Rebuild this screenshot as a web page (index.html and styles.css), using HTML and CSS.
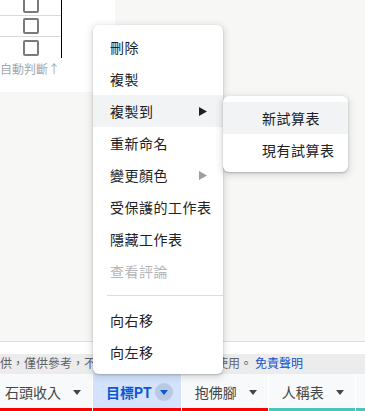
FILE: index.html
```html
<!DOCTYPE html>
<html lang="zh-Hant">
<head>
<meta charset="utf-8">
<title>Sheets menu</title>
<link rel="stylesheet" href="styles.css">
</head>
<body>
<div class="app">
  <div class="sheet">
    <div class="cells">
      <div class="grid">
        <div class="row"><span class="cb"></span></div>
        <div class="row"><span class="cb"></span></div>
        <div class="row last"><span class="cb"></span></div>
      </div>
      <div class="note">自動判斷↑</div>
    </div>
  </div>
  <div class="hscroll"></div>
  <div class="notice">供，僅供參考，不得轉載或作為商業上之使用。 <a class="link">免責聲明</a></div>
  <div class="tabs">
    <div class="tab red"><span class="tname">石頭收入</span><span class="caret"></span></div>
    <div class="tab red active"><span class="tname">目標PT</span><span class="cbtn"><span class="caret"></span></span></div>
    <div class="tab red"><span class="tname">抱佛腳</span><span class="caret"></span></div>
    <div class="tab teal"><span class="tname">人稱表</span><span class="caret"></span></div>
    <div class="tab teal more"></div>
  </div>
</div>

<div class="menu main">
  <div class="item">刪除</div>
  <div class="item">複製</div>
  <div class="item hover">複製到<svg class="arrow" width="8" height="9" viewBox="0 0 8 9"><path d="M0 0L8 4.5L0 9Z" fill="#202124"/></svg></div>
  <div class="item">重新命名</div>
  <div class="item">變更顏色<svg class="arrow" width="8" height="9" viewBox="0 0 8 9"><path d="M0 0L8 4.5L0 9Z" fill="#9aa0a6"/></svg></div>
  <div class="item">受保護的工作表</div>
  <div class="item">隱藏工作表</div>
  <div class="item disabled">查看評論</div>
  <div class="sep"></div>
  <div class="item">向右移</div>
  <div class="item">向左移</div>
</div>

<div class="menu sub">
  <div class="item hover">新試算表</div>
  <div class="item">現有試算表</div>
</div>
</body>
</html>
```

FILE: styles.css
```css
* { box-sizing: border-box; }
html, body {
  margin: 0;
  padding: 0;
}
body {
  width: 365px;
  height: 411px;
  overflow: hidden;
  background: #f7f8f6;
  font-family: Roboto, "Noto Sans CJK TC", sans-serif;
  color: #202124;
  position: relative;
}
.app {
  display: flex;
  flex-direction: column;
  height: 411px;
}
.sheet {
  height: 342px;
  border-bottom: 1px solid #dadce0;
  overflow: hidden;
}
.cells {
  width: 115px;
  height: 92px;
  background: #fff;
  overflow: hidden;
}
.grid {
  width: 62px;
  border-right: 1px solid #000;
  margin-top: -5px;
}
.row {
  height: 21px;
  border-bottom: 1px solid #d9d9d9;
  display: flex;
  align-items: center;
  justify-content: center;
}
.row.last {
  border-bottom: none;
}
.cb {
  width: 16px;
  height: 16px;
  border: 2px solid #7a7a7a;
  border-radius: 2px;
}
.note {
  margin-top: 4px;
  font-size: 12px;
  line-height: 16px;
  color: #a3a8ad;
  white-space: nowrap;
}
.hscroll {
  height: 12px;
  background: #fff;
}
.notice {
  height: 20px;
  background: #ececec;
  font-size: 12px;
  line-height: 20px;
  color: #5f6368;
  white-space: nowrap;
  overflow: hidden;
}
.link {
  color: #1155cc;
}
.tabs {
  height: 37px;
  display: flex;
  gap: 1px;
  background: #fff;
  margin-left: -8px;
  overflow: hidden;
}
.tab {
  flex: none;
  display: flex;
  align-items: center;
  gap: 12px;
  padding: 2px 11px 0 13px;
  background: #f8f9fa;
  border-bottom: 3px solid #ff0000;
  font-size: 14px;
  color: #444746;
}
.tab.teal {
  border-bottom-color: #4ac4bd;
}
.tab.more {
  width: 60px;
}
.tab.active {
  background: #d3e3fd;
  color: #0b57d0;
  font-weight: 700;
  gap: 3px;
  padding-right: 8px;
}
.tname {
  white-space: nowrap;
}
.caret {
  width: 0;
  height: 0;
  border-left: 4px solid transparent;
  border-right: 4px solid transparent;
  border-top: 5px solid #444746;
}
.cbtn {
  width: 18px;
  height: 18px;
  border-radius: 50%;
  background: #b9c9e4;
  display: flex;
  align-items: center;
  justify-content: center;
}
.cbtn .caret {
  border-top-color: #0b57d0;
}
.menu {
  position: absolute;
  background: #fff;
  border-radius: 6px;
  padding: 6px 0;
  box-shadow: 0 2px 6px 2px rgba(60, 64, 67, 0.15), 0 1px 2px rgba(60, 64, 67, 0.3);
}
.menu.main {
  left: 93px;
  top: 25px;
  width: 130px;
}
.menu.sub {
  left: 223px;
  top: 96px;
  width: 125px;
}
.item {
  height: 32px;
  display: flex;
  align-items: center;
  padding-left: 17px;
  font-size: 14px;
  letter-spacing: 0.5px;
  color: #202124;
  white-space: nowrap;
  position: relative;
}
.sub .item {
  padding-left: 39px;
}
.item.hover {
  background: #f1f3f4;
}
.item.disabled {
  color: #b4b6b9;
}
.arrow {
  position: absolute;
  left: 106px;
  top: 12px;
}
.sep {
  height: 1px;
  background: #dadce0;
  margin: 8px 0 8px 14px;
}
```
